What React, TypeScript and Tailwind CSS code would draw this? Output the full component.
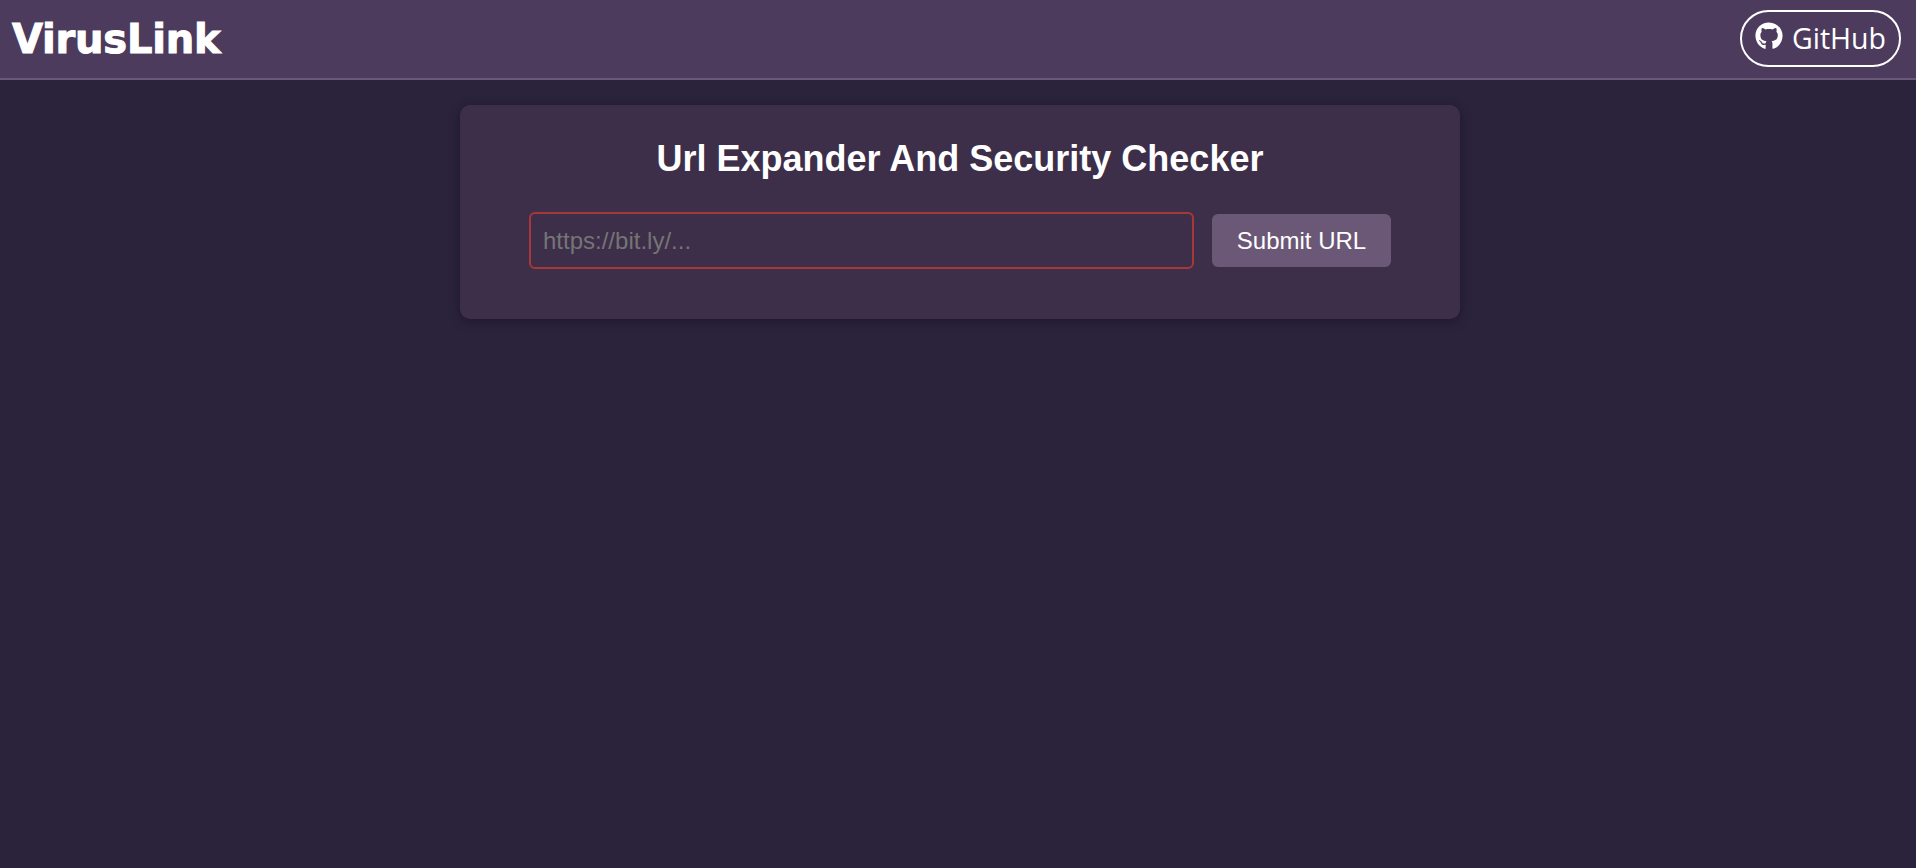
import React, { useState } from 'react';
import { FaGithub } from 'react-icons/fa';

const App: React.FC = () => {
  const [url, setUrl] = useState('');

  return (
    <div className="min-h-screen bg-[#2b223c] font-['Liberation_Sans',Arial,sans-serif] text-white">
      <header className="flex h-[80px] items-center justify-between border-b-2 border-[#6b5876] bg-[#4d3b5e] pl-[12px] pr-[15px]">
        <h1 className="font-['DejaVu_Sans',sans-serif] text-[40px] font-bold leading-none tracking-[-0.2px] [-webkit-text-stroke:1px_white]">VirusLink</h1>
        <a
          href="#"
          className="mb-[2px] flex h-[57px] w-[161px] items-center justify-center gap-[9px] rounded-full border-2 border-white font-['Open_Sans',sans-serif] text-[28.5px] leading-none"
        >
          <FaGithub className="mb-[5px] h-[28px] w-[28px]" />
          GitHub
        </a>
      </header>

      <main className="flex justify-center pl-[4px] pt-[25px]">
        <section className="w-[1000px] rounded-[10px] bg-[#3d2e4a] pb-[50px] pt-[31px] shadow-[0_2px_12px_rgba(0,0,0,0.3)]">
          <h2 className="text-center text-[36px] font-bold leading-[46px]">Url Expander And Security Checker</h2>
          <form className="mt-[30px] flex items-center gap-[18px] pl-[69px] pr-[69px]" onSubmit={e => e.preventDefault()}>
            <input
              value={url}
              onChange={e => setUrl(e.target.value)}
              placeholder="https://bit.ly/..."
              className="h-[57px] min-w-0 flex-1 rounded-[6px] border-2 border-[#a83838] bg-transparent px-[12px] text-[24px] text-white outline-none placeholder:text-[#757575]"
            />
            <button type="submit" className="h-[53px] w-[179px] rounded-[6px] bg-[#6b5876] text-[24px] text-white">
              Submit URL
            </button>
          </form>
        </section>
      </main>
    </div>
  );
};

export default App;
